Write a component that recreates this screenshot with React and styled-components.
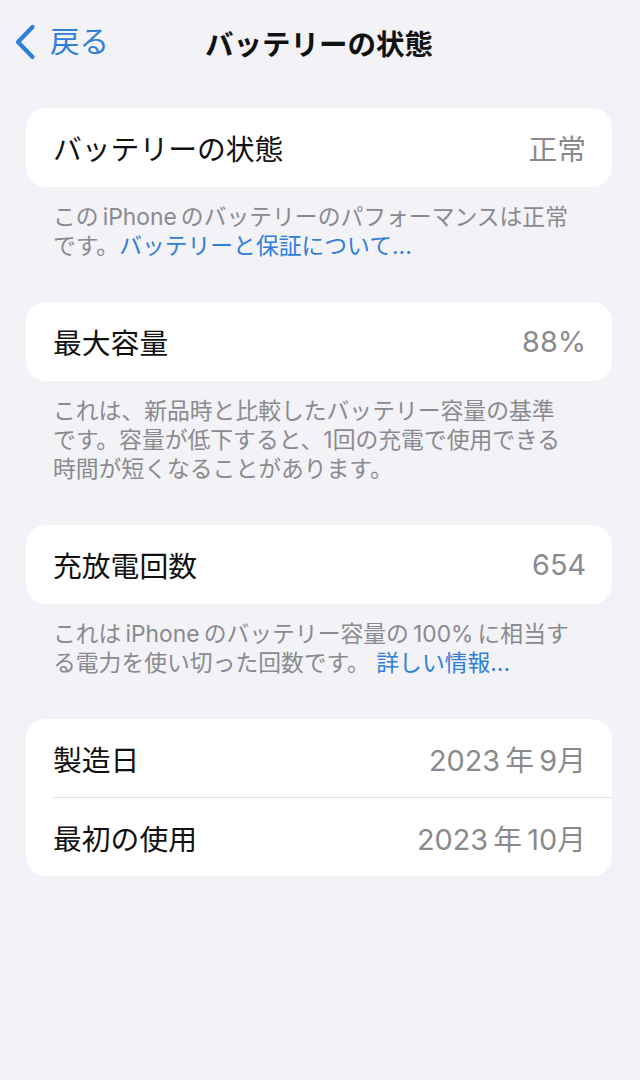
import React from "react";
import styled, { createGlobalStyle } from "styled-components";

const GlobalStyle = createGlobalStyle`
  html, body {
    margin: 0;
    padding: 0;
    background: #f2f2f7;
  }
  body {
    font-family: "Inter", "Noto Sans CJK JP", "Noto Sans", sans-serif;
    -webkit-font-smoothing: antialiased;
  }
`;

const Screen = styled.div`
  width: 640px;
  min-height: 1080px;
  background: #f2f2f7;
`;

const NavBar = styled.header`
  height: 84px;
  display: grid;
  grid-template-columns: 1fr auto 1fr;
  align-items: center;
`;

const BackButton = styled.button`
  justify-self: start;
  display: flex;
  align-items: center;
  gap: 14px;
  margin: 0;
  padding: 0 0 0 14px;
  border: 0;
  background: none;
  color: #2f7ed8;
  font: inherit;
  font-size: 29.5px;
  line-height: 1;
  cursor: pointer;
`;

const Title = styled.h1`
  margin: 0;
  font-size: 28.5px;
  font-weight: 700;
  color: #111;
  transform: translateX(-1px);
`;

const Content = styled.main`
  padding: 24px 28px 0 26px;
`;

const Card = styled.section`
  background: #ffffff;
  border-radius: 20px;
  overflow: hidden;
`;

const Row = styled.div`
  display: flex;
  padding-left: 27px;
`;

const RowBody = styled.div`
  flex: 1;
  height: ${(p) => (p.$single ? "79px" : "78px")};
  display: flex;
  align-items: center;
  justify-content: space-between;
  padding-right: 26px;
  border-top: ${(p) => (p.$divided ? "1px solid #e2e2e6" : "0")};
`;

const Label = styled.span`
  font-size: 28.8px;
  color: #111;
`;

const Value = styled.span`
  font-size: 28.8px;
  color: #8a8a8e;
`;

const Footer = styled.p`
  margin: 0;
  padding: 14.5px 16px 42.5px 27px;
  font-size: 22.8px;
  line-height: 29px;
  color: #8a8a8e;
`;

const Link = styled.a`
  color: #2f7ed8;
  text-decoration: none;
`;

const Chevron = () => (
  <svg width="22" height="36" viewBox="0 0 22 36" fill="none">
    <path
      d="M18.5 3 L4 18 L18.5 33"
      stroke="#2f7ed8"
      strokeWidth="4.2"
      strokeLinecap="round"
      strokeLinejoin="round"
    />
  </svg>
);

const InfoRow = ({ label, value, divided, single }) => (
  <Row>
    <RowBody $divided={divided} $single={single}>
      <Label>{label}</Label>
      <Value>{value}</Value>
    </RowBody>
  </Row>
);

export default function App() {
  return (
    <>
      <GlobalStyle />
      <Screen>
        <NavBar>
          <BackButton>
            <Chevron />
            <span>戻る</span>
          </BackButton>
          <Title>バッテリーの状態</Title>
          <span />
        </NavBar>

        <Content>
          <Card>
            <InfoRow label="バッテリーの状態" value="正常" single />
          </Card>
          <Footer>
            {"この\u2009iPhone\u2009のバッテリーのパフォーマンスは正常"}
            <br />
            です。<Link>バッテリーと保証について...</Link>
          </Footer>

          <Card>
            <InfoRow label="最大容量" value="88%" single />
          </Card>
          <Footer>
            これは、新品時と比較したバッテリー容量の基準
            <br />
            です。容量が低下すると、1回の充電で使用できる
            <br />
            時間が短くなることがあります。
          </Footer>

          <Card>
            <InfoRow label="充放電回数" value="654" single />
          </Card>
          <Footer>
            {"これは\u2009iPhone\u2009のバッテリー容量の\u2009100%\u2009に相当す"}
            <br />
            る電力を使い切った回数です。 <Link>詳しい情報...</Link>
          </Footer>

          <Card>
            <InfoRow label="製造日" value={"2023\u2009年\u20099月"} />
            <InfoRow label="最初の使用" value={"2023\u2009年\u200910月"} divided />
          </Card>
        </Content>
      </Screen>
    </>
  );
}
